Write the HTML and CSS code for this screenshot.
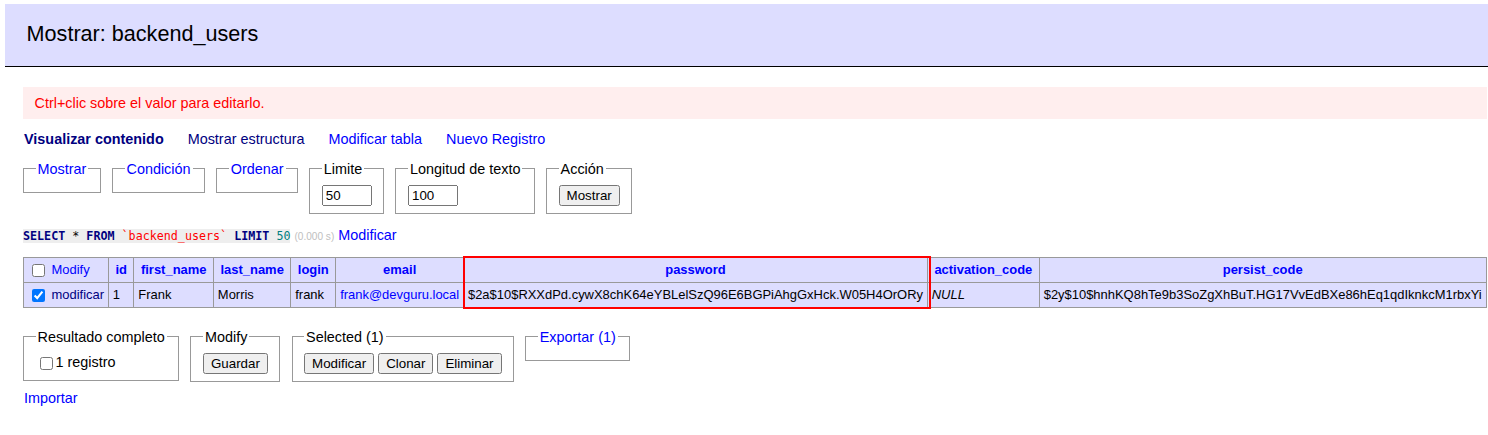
FILE: index.html
```html
<!DOCTYPE html>
<html lang="es">
<head>
<meta charset="utf-8">
<title>Mostrar: backend_users</title>
<link rel="stylesheet" href="styles.css">
</head>
<body>
<div class="content">
<h2>Mostrar: backend_users</h2>
<div class="error">Ctrl+clic sobre el valor para editarlo.</div>
<p class="links">
<a class="visited active" href="#select">Visualizar contenido</a>
<a class="visited" href="#table">Mostrar estructura</a>
<a href="#create">Modificar tabla</a>
<a href="#edit">Nuevo Registro</a>
</p>
<form class="select-form">
<fieldset><legend><a href="#fieldset-select">Mostrar</a></legend></fieldset>
<fieldset><legend><a href="#fieldset-search">Condición</a></legend></fieldset>
<fieldset><legend><a href="#fieldset-sort">Ordenar</a></legend></fieldset>
<fieldset><legend>Limite</legend><div><input type="text" class="size" value="50"></div></fieldset>
<fieldset><legend>Longitud de texto</legend><div><input type="text" class="size" value="100"></div></fieldset>
<fieldset><legend>Acción</legend><div><button type="button" class="btn">Mostrar</button></div></fieldset>
</form>
<p class="query"><code class="jush-sql"><a class="kw" href="#">SELECT</a> * <a class="kw" href="#">FROM</a> <span class="bac">`backend_users`</span> <a class="kw" href="#">LIMIT</a> <span class="num">50</span></code> <span class="time">(0.000 s)</span> <a href="#sql">Modificar</a></p>
<div class="table-wrap">
<table class="data">
<thead>
<tr>
<td class="first"><input type="checkbox"> <a href="#modify">Modify</a></td>
<th><a href="#">id</a></th>
<th><a href="#">first_name</a></th>
<th><a href="#">last_name</a></th>
<th><a href="#">login</a></th>
<th><a href="#">email</a></th>
<th><a href="#">password</a></th>
<th><a href="#">activation_code</a></th>
<th><a href="#">persist_code</a></th>
</tr>
</thead>
<tbody>
<tr class="checked">
<td class="first"><input type="checkbox" checked> <a class="visited" href="#edit">modificar</a></td>
<td>1</td>
<td>Frank</td>
<td>Morris</td>
<td>frank</td>
<td><a href="#mail">frank@devguru.local</a></td>
<td>$2a$10$RXXdPd.cywX8chK64eYBLelSzQ96E6BGPiAhgGxHck.W05H4OrORy</td>
<td><i>NULL</i></td>
<td>$2y$10$hnhKQ8hTe9b3SoZgXhBuT.HG17VvEdBXe86hEq1qdIknkcM1rbxYi</td>
</tr>
</tbody>
</table>
<div class="highlight"></div>
</div>
<div class="footer">
<fieldset><legend>Resultado completo</legend><label class="check"><input type="checkbox">1 registro</label></fieldset>
<fieldset><legend>Modify</legend><div><button type="button" class="btn">Guardar</button></div></fieldset>
<fieldset><legend>Selected (1)</legend><div><button type="button" class="btn">Modificar</button> <button type="button" class="btn">Clonar</button> <button type="button" class="btn">Eliminar</button></div></fieldset>
<fieldset><legend><a href="#export">Exportar (1)</a></legend></fieldset>
</div>
<div class="import"><a href="#import">Importar</a></div>
</div>
</body>
</html>
```
FILE: styles.css
```css
html { overflow: hidden; }
body {
  margin: 0;
  color: #000;
  background: #fff;
  font: 14.4px/1.25 "Liberation Sans", Arial, Helvetica, sans-serif;
  width: fit-content;
}
a { color: blue; text-decoration: none; }
a.visited { color: navy; }
.active { font-weight: bold; }
.content { padding: 4px 20px 20px 23px; }
h2 {
  font-size: 21.6px;
  margin: 0 0 20px -18px;
  padding: 17.28px 21.6px;
  border-bottom: 1px solid #000;
  color: #000;
  font-weight: normal;
  background: #ddf;
  line-height: 1.25;
}
.error {
  color: red;
  background: #fee;
  padding: 7.2px 11.52px;
  margin: 0 20px 0 0;
}
p { margin: 11.52px 20px 0 0; }
.links { padding-left: 1px; }
.links a { white-space: nowrap; margin-right: 20px; }
form { margin: 0; }
fieldset {
  display: inline-block;
  vertical-align: top;
  padding: 7.2px 11.52px;
  margin: 11.52px 7.2px 0 0;
  border: 1px solid #999;
  min-width: 0;
}
legend { padding: 0 2px; }
input { vertical-align: middle; }
input.size {
  width: 42px;
  font: 13.333px "Liberation Sans", Arial, sans-serif;
}
.btn {
  font: 13.333px "Liberation Sans", Arial, sans-serif;
  vertical-align: middle;
}
code {
  background: #eee;
  font-family: "DejaVu Sans Mono", monospace;
  font-size: 11.7px;
}
.jush-sql a.kw { color: navy; font-weight: bold; }
.bac { color: red; }
.num { color: #007F7F; }
.time { color: silver; font-size: 10.08px; }
.table-wrap { position: relative; width: fit-content; margin-right: 20px; }
table.data {
  margin: 13.4px 0 0 0;
  border-collapse: collapse;
  font-size: 12.96px;
  white-space: pre;
}
td, th { border: 1px solid #999; padding: 2.6px 3.9px; }
thead th { text-align: center; padding: 2.6px 6.5px; background: #ddf; }
thead td { background: #ddf; }
tbody td { background: #ddf; }
td.first input { margin: 3px 3px 2.6px 4px; }
.highlight {
  position: absolute;
  left: 440px;
  top: -1px;
  width: 464px;
  height: 49px;
  border: 2px solid #f00;
  pointer-events: none;
}
.footer { padding-top: 20px; padding-bottom: 7.2px; }
.footer fieldset { margin-top: 0; }
.check input { margin: 3px 3px 3px 4px; }
.import { margin: 0 0 0 1px; }
```
